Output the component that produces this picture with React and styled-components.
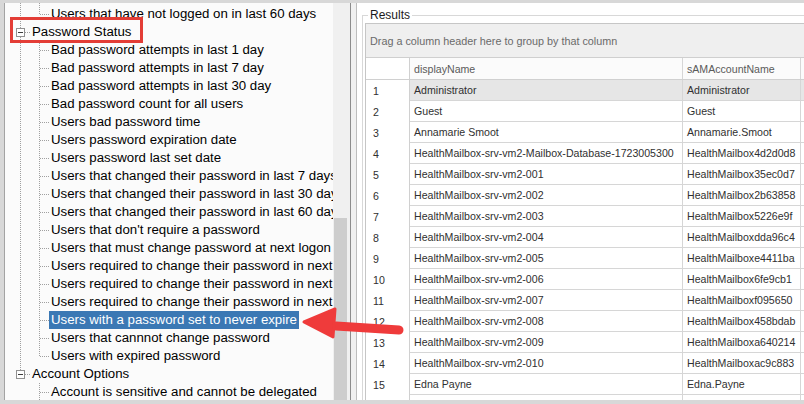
import React from 'react';
import styled, { createGlobalStyle } from 'styled-components';

const GlobalStyle = createGlobalStyle`
  html, body {
    margin: 0;
    padding: 0;
    background: #ffffff;
  }
`

const Window = styled.div`
  position: relative;
  width: 804px;
  height: 404px;
  box-sizing: border-box;
  padding: 3px 0 4px 4px;
  background: #d8d8d8;
  display: flex;
  overflow: hidden;
  font-family: "Liberation Sans", Arial, sans-serif;
`

const LeftPanel = styled.div`
  width: 344px;
  flex: none;
  display: flex;
  box-sizing: border-box;
  border-left: 1px solid #a3a3a3;
  background: #fbfbfb;
`

const Tree = styled.div`
  flex: 1;
  overflow: hidden;
  padding-left: 6px;
`

const TreeList = styled.div`
  margin-top: -16px;
`

const TreeRow = styled.div`
  display: flex;
  align-items: center;
  height: 18px;
  white-space: nowrap;
`

const Label = styled.span`
  height: 18px;
  line-height: 18px;
  padding: 0 2px;
  font-size: 13.25px;
  color: ${(p) => (p.$selected ? '#ffffff' : '#000000')};
  background: ${(p) => (p.$selected ? '#3b78b4' : 'transparent')};
`

const Scrollbar = styled.div`
  width: 15px;
  flex: none;
  background: #f0f0f0;
  display: flex;
  flex-direction: column;
  justify-content: flex-end;
`

const Thumb = styled.div`
  height: 182px;
  margin: 0 1px;
  background: #cdcdcd;
`

const Splitter = styled.div`
  width: 9px;
  flex: none;
  box-sizing: border-box;
  background: linear-gradient(to right, #f0f0f0 2px, #8c8c8c 2px, #8c8c8c 3px, #f0f0f0 3px);
  border-right: 1px solid #bdbdbd;
`

const RightPanel = styled.div`
  flex: 1;
  min-width: 0;
  background: #ffffff;
  padding: 5px 0 0 5px;
  overflow: hidden;
`

const Fieldset = styled.fieldset`
  margin: 0;
  padding: 0 0 0 2px;
  border: 1px solid #d8d8d8;
  border-right: 0;
  border-bottom: 0;
  min-width: 0;
  height: 100%;
  box-sizing: border-box;
`

const Legend = styled.legend`
  margin-left: 3px;
  padding: 0 2px;
  font-size: 12px;
  line-height: 14px;
  color: #1a1a1a;
`

const Grid = styled.div`
  margin-top: 1px;
  width: 480px;
  border-left: 1px solid #c6c6c6;
  border-top: 1px solid #c6c6c6;
  font-size: 10.6px;
  color: #303030;
`

const GroupPanel = styled.div`
  height: 34px;
  box-sizing: border-box;
  display: flex;
  align-items: center;
  padding-left: 4px;
  background: #efefef;
  border-bottom: 1px solid #cfcfcf;
  color: #6a6a6a;
  font-size: 10.8px;
`

const GridRow = styled.div`
  display: grid;
  grid-template-columns: 44px 273px 118px 1fr;
  height: ${(p) => (p.$header ? '22px' : '21px')};
  box-sizing: border-box;
  border-bottom: ${(p) => (p.$header ? '1px solid #d0d0d0' : '0')};
  background: ${(p) => (p.$header ? '#fbfbfb' : '#ffffff')};
`

const NumCell = styled.div`
  display: flex;
  align-items: center;
  padding-left: 7px;
  border-right: 1px solid #d0d0d0;
  background: #ffffff;
`

const Cell = styled.div`
  display: flex;
  align-items: center;
  padding-left: 4px;
  overflow: hidden;
  white-space: nowrap;
  border-right: 1px solid #d6d6d6;
  border-bottom: ${(p) => (p.$header ? '0' : '1px solid #d6d6d6')};
  color: ${(p) => (p.$header ? '#5a5a5a' : '#303030')};
  background: ${(p) => (p.$active ? '#e6e6e6' : 'transparent')};
`

const Overlay = styled.svg`
  position: absolute;
  left: 0;
  top: 0;
  pointer-events: none;
`

const Highlight = styled.div`
  position: absolute;
  left: 10px;
  top: 17px;
  width: 133px;
  height: 26px;
  box-sizing: border-box;
  border: 3px solid #e33d36;
  pointer-events: none;
`

const dot = { stroke: '#a0a0a0', strokeWidth: 1, strokeDasharray: '1 1', shapeRendering: 'crispEdges' }

// tree connector drawing for one indent level
const Connector = ({ kind }) => {
  const up = kind !== 'blank'
  const down = kind === 'pipe' || kind === 'tee' || kind === 'box-tee'
  const across = kind !== 'pipe' && kind !== 'blank'
  const box = kind.startsWith('box')
  return (
    <svg width="19" height="18" style={{ flex: 'none', display: 'block' }}>
      {up && <line x1="9.5" y1="0" x2="9.5" y2={down ? 18 : 9} {...dot} />}
      {across && <line x1={box ? 14 : 10} y1="9.5" x2="19" y2="9.5" {...dot} />}
      {box && (
        <g>
          <rect x="5.5" y="5.5" width="8" height="8" fill="#ffffff" stroke="#919191" shapeRendering="crispEdges" />
          <line x1="7" y1="9.5" x2="12" y2="9.5" stroke="#3c3c3c" shapeRendering="crispEdges" />
        </g>
      )}
    </svg>
  )
}

const passwordItems = [
  'Bad password attempts in last 1 day',
  'Bad password attempts in last 7 day',
  'Bad password attempts in last 30 day',
  'Bad password count for all users',
  'Users bad password time',
  'Users password expiration date',
  'Users password last set date',
  'Users that changed their password in last 7 days',
  'Users that changed their password in last 30 days',
  'Users that changed their password in last 60 days',
  "Users that don't require a password",
  'Users that must change password at next logon',
  'Users required to change their password in next 7 days',
  'Users required to change their password in next 14 days',
  'Users required to change their password in next 30 days',
  'Users with a password set to never expire',
  'Users that cannnot change password',
  'Users with expired password',
]

const nodes = [
  { text: 'Users that have not logged on in last 30 days', guides: ['pipe', 'tee'] },
  { text: 'Users that have not logged on in last 60 days', guides: ['pipe', 'elbow'] },
  { text: 'Password Status', guides: ['box-tee'] },
  ...passwordItems.map((text, i) => ({
    text,
    guides: ['pipe', i === passwordItems.length - 1 ? 'elbow' : 'tee'],
    selected: text === 'Users with a password set to never expire',
  })),
  { text: 'Account Options', guides: ['box-elbow'] },
  { text: 'Account is sensitive and cannot be delegated', guides: ['blank', 'tee'] },
  { text: 'Account is trusted for delegation', guides: ['blank', 'tee'] },
]

const rows = [
  ['Administrator', 'Administrator'],
  ['Guest', 'Guest'],
  ['Annamarie Smoot', 'Annamarie.Smoot'],
  ['HealthMailbox-srv-vm2-Mailbox-Database-1723005300', 'HealthMailbox4d2d0d8'],
  ['HealthMailbox-srv-vm2-001', 'HealthMailbox35ec0d7'],
  ['HealthMailbox-srv-vm2-002', 'HealthMailbox2b63858'],
  ['HealthMailbox-srv-vm2-003', 'HealthMailbox5226e9f'],
  ['HealthMailbox-srv-vm2-004', 'HealthMailboxdda96c4'],
  ['HealthMailbox-srv-vm2-005', 'HealthMailboxe4411ba'],
  ['HealthMailbox-srv-vm2-006', 'HealthMailbox6fe9cb1'],
  ['HealthMailbox-srv-vm2-007', 'HealthMailboxf095650'],
  ['HealthMailbox-srv-vm2-008', 'HealthMailbox458bdab'],
  ['HealthMailbox-srv-vm2-009', 'HealthMailboxa640214'],
  ['HealthMailbox-srv-vm2-010', 'HealthMailboxac9c883'],
  ['Edna Payne', 'Edna.Payne'],
  ['Daniel Torres', 'Daniel.Torres'],
]

const App = () => {
  return (
    <Window>
      <GlobalStyle />
      <LeftPanel>
        <Tree>
          <TreeList>
            {nodes.map((n) => (
              <TreeRow key={n.text}>
                {n.guides.map((g, i) => <Connector key={i} kind={g} />)}
                <Label $selected={n.selected}>{n.text}</Label>
              </TreeRow>
            ))}
          </TreeList>
        </Tree>
        <Scrollbar>
          <Thumb />
        </Scrollbar>
      </LeftPanel>
      <Splitter />
      <RightPanel>
        <Fieldset>
          <Legend>Results</Legend>
          <Grid>
            <GroupPanel>Drag a column header here to group by that column</GroupPanel>
            <GridRow $header>
              <NumCell />
              <Cell $header>displayName</Cell>
              <Cell $header>sAMAccountName</Cell>
              <Cell $header />
            </GridRow>
            {rows.map((r, i) => (
              <GridRow key={r[1]}>
                <NumCell>{i + 1}</NumCell>
                <Cell $active={i === 0}>{r[0]}</Cell>
                <Cell $active={i === 0}>{r[1]}</Cell>
                <Cell $active={i === 0} />
              </GridRow>
            ))}
          </Grid>
        </Fieldset>
      </RightPanel>

      <Highlight />
      <Overlay width="804" height="404">
        <line x1="336" y1="326" x2="399" y2="330" stroke="#ef3b3b" strokeWidth="9" strokeLinecap="round" />
        <polygon points="304,322 335,309 333,337" fill="#ef3b3b" stroke="#ef3b3b" strokeWidth="3" strokeLinejoin="round" />
      </Overlay>
    </Window>
  )
}

export default App;
